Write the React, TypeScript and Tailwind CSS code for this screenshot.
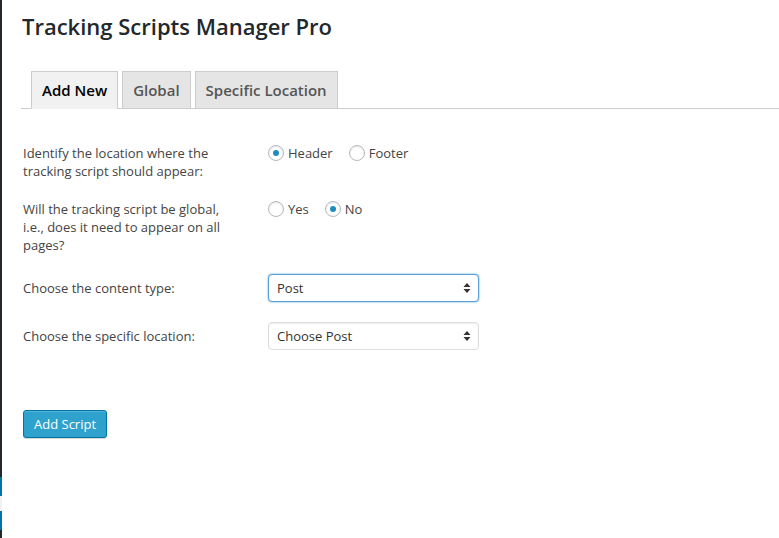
import React from 'react';

const font = { fontFamily: '"Open Sans", "Noto Sans", sans-serif' };

const Radio = ({ checked, label }: { checked?: boolean; label: string }) => (
  <label className="flex items-center h-[18px] mr-[16px]">
    <span className="w-[16px] h-[16px] rounded-full border border-[#b4b9be] bg-white shadow-[inset_0_1px_2px_rgba(0,0,0,0.1)] flex items-center justify-center">
      {checked && <span className="w-[6px] h-[6px] rounded-full bg-[#1e8cbe]" />}
    </span>
    <span className="ml-[4px] text-[13px] text-[#444]">{label}</span>
  </label>
);

const Arrows = () => (
  <svg width="8" height="12" viewBox="0 0 8 12" className="ml-auto">
    <path d="M4 1 L7.5 5 L0.5 5 Z" fill="#333" />
    <path d="M4 11 L7.5 7 L0.5 7 Z" fill="#333" />
  </svg>
);

const Select = ({ value, focused }: { value: string; focused?: boolean }) => (
  <div
    className={
      'w-[211px] h-[28px] rounded-[4px] bg-white flex items-center pl-[8px] pr-[7px] pb-px text-[13px] text-[#333] border ' +
      (focused
        ? 'border-[#5b9dd9] shadow-[0_0_2px_rgba(30,140,190,0.8)]'
        : 'border-[#ddd] shadow-[inset_0_1px_2px_rgba(0,0,0,0.07)]')
    }
  >
    <span>{value}</span>
    <Arrows />
  </div>
);

export default function App() {
  return (
    <div className="flex h-[538px] bg-white overflow-hidden" style={font}>
      {/* admin menu edge */}
      <div className="w-[2px] flex flex-col shrink-0">
        <div className="h-[477px] bg-[#23282d]" />
        <div className="h-[19px] bg-[#0074a2]" />
        <div className="h-[15px] bg-[#f1f1f1]" />
        <div className="h-[19px] bg-[#0074a2]" />
        <div className="flex-1 bg-[#23282d]" />
      </div>

      <div className="flex-1 pl-[19px]">
        <h1 className="mt-[11px] ml-[1px] text-[22px] leading-[30px] font-semibold text-[#23282d]">
          Tracking Scripts Manager Pro
        </h1>

        <nav className="mt-[30px] flex gap-[4px] pl-[10px] border-b border-[#ccc]">
          <span className="-mb-px px-[10px] py-[6px] text-[15px] leading-[24px] font-semibold border border-[#ccc] border-b-[#f1f1f1] bg-[#f1f1f1] text-black">
            Add New
          </span>
          <span className="-mb-px px-[10px] py-[6px] text-[15px] leading-[24px] font-semibold border border-[#ccc] bg-[#e5e5e5] text-[#555]">
            Global
          </span>
          <span className="-mb-px px-[10px] py-[6px] text-[15px] leading-[24px] font-semibold border border-[#ccc] bg-[#e5e5e5] text-[#555]">
            Specific Location
          </span>
        </nav>

        <div className="mt-[35px] ml-[2px] flex flex-col gap-[20px] text-[13px] leading-[18px] text-[#444]">
          <div className="flex items-start">
            <div className="w-[220px] mr-[25px]">Identify the location where the tracking script should appear:</div>
            <div className="flex">
              <Radio checked label="Header" />
              <Radio label="Footer" />
            </div>
          </div>

          <div className="flex items-start">
            <div className="w-[220px] mr-[25px]">
              Will the tracking script be global, i.e., does it need to appear on all pages?
            </div>
            <div className="flex">
              <Radio label="Yes" />
              <Radio checked label="No" />
            </div>
          </div>

          <div className="flex items-center">
            <div className="w-[220px] mr-[25px]">Choose the content type:</div>
            <Select value="Post" focused />
          </div>

          <div className="flex items-center">
            <div className="w-[220px] mr-[25px]">Choose the specific location:</div>
            <Select value="Choose Post" />
          </div>

          <div className="mt-[40px]">
            <button className="h-[28px] px-[10px] rounded-[3px] bg-[#2ea2cc] border border-[#0074a2] text-white text-[13px] font-medium leading-[26px] shadow-[inset_0_1px_0_rgba(120,200,230,0.5),0_1px_0_rgba(0,0,0,0.15)]">
              Add Script
            </button>
          </div>
        </div>
      </div>
    </div>
  );
}
